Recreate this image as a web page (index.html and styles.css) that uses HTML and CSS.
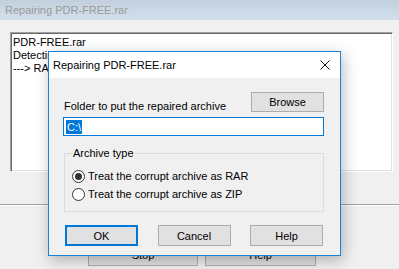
FILE: index.html
```html
<!DOCTYPE html>
<html lang="en">
<head>
  <meta charset="UTF-8">
  <title>Repairing PDR-FREE.rar</title>
  <link rel="stylesheet" href="styles.css">
</head>
<body>
  <div class="app">
    <div class="app-title">Repairing PDR-FREE.rar</div>
    <div class="app-body">
      <div class="log">
        <div>PDR-FREE.rar</div>
        <div>Detecting archive type</div>
        <div>---&gt; RAR archive</div>
      </div>
      <div class="app-sep"></div>
      <div class="app-buttons">
        <button class="btn btn-stop">Stop</button>
        <button class="btn btn-help">Help</button>
      </div>
    </div>

    <div class="dialog">
      <div class="dialog-title">
        <span>Repairing PDR-FREE.rar</span>
        <svg class="close" width="10" height="10" viewBox="0 0 10 10">
          <path d="M0.5 0.5 L9.5 9.5 M9.5 0.5 L0.5 9.5" stroke="#111" stroke-width="1" fill="none"/>
        </svg>
      </div>
      <div class="dialog-body">
        <div class="folder-row">
          <label class="folder-label">Folder to put the repaired archive</label>
          <button class="btn btn-browse">Browse</button>
        </div>
        <div class="path-input"><span class="sel">C:\</span></div>

        <fieldset class="group">
          <legend>Archive type</legend>
          <div class="radio-row"><span class="radio checked"></span>Treat the corrupt archive as RAR</div>
          <div class="radio-row"><span class="radio"></span>Treat the corrupt archive as ZIP</div>
        </fieldset>

        <div class="dialog-buttons">
          <button class="btn btn-default">OK</button>
          <button class="btn">Cancel</button>
          <button class="btn">Help</button>
        </div>
      </div>
    </div>
  </div>
</body>
</html>
```

FILE: styles.css
```css
body {
  margin: 0;
  width: 399px;
  height: 269px;
  overflow: hidden;
  background-color: #f0f0f0;
  font-family: 'Liberation Sans', Arial, sans-serif;
  font-size: 11px;
  color: #000;
}

.app {
  position: relative;
  height: 269px;
}

.app-title {
  height: 20px;
  line-height: 20px;
  padding-left: 5px;
  font-size: 11px;
  color: #9a9a9a;
  background: linear-gradient(#c2cfdc, #d4e0ed);
}

.app-body {
  padding: 12px 6px 0 10px;
}

.log {
  height: 135px;
  padding: 3px 2px 0 2px;
  background-color: #fff;
  border: 1px solid;
  border-color: #a0a0a0 #fff #fff #a0a0a0;
  box-shadow: inset 1px 1px #696969, inset -1px -1px #e3e3e3;
  line-height: 13px;
}

.app-sep {
  margin: 32px -6px 0 -10px;
  height: 1px;
  background-color: #a0a0a0;
  border-bottom: 1px solid #fff;
}

.app-buttons {
  display: flex;
  gap: 7px;
  margin-top: 38px;
  padding-left: 78px;
}

.btn {
  height: 21px;
  padding: 0;
  font-family: inherit;
  font-size: 11px;
  color: #000;
  background-color: #e1e1e1;
  border: 1px solid #adadad;
}

.btn-stop { width: 110px; height: 22px; }
.btn-help { width: 111px; height: 22px; }

.dialog {
  position: absolute;
  left: 48px;
  top: 51px;
  width: 291px;
  background-color: #f0f0f0;
  border: 1px solid #1883d7;
  box-shadow: 2px 4px 14px rgba(0, 0, 0, 0.28);
}

.dialog-title {
  height: 26px;
  display: flex;
  align-items: center;
  justify-content: space-between;
  padding: 0 10px 0 4px;
  background-color: #fff;
}

.dialog-body {
  padding: 14px 16px 9px 14px;
}

.folder-row {
  display: flex;
  justify-content: space-between;
  align-items: flex-end;
}

.folder-label {
  padding-left: 1px;
  line-height: 15px;
  margin-bottom: -2px;
}

.btn-browse {
  width: 73px;
  height: 20px;
}

.path-input {
  margin-top: 5px;
  height: 15px;
  padding: 1px 2px;
  background-color: #fff;
  border: 1px solid #0078d7;
  line-height: 15px;
}

.sel {
  display: inline-block;
  height: 14px;
  line-height: 14px;
  margin-top: 1px;
  padding: 0 1px;
  vertical-align: top;
  background-color: #0078d7;
  color: #fff;
}

.group {
  margin: 10px 0 0 1px;
  padding: 6px 7px 8px 7px;
  border: 1px solid #dcdcdc;
}

.group legend {
  padding: 0 1px;
  line-height: 15px;
}

.radio-row {
  display: flex;
  align-items: center;
  gap: 3px;
  height: 18px;
}

.radio {
  width: 11px;
  height: 11px;
  border: 1px solid #333;
  border-radius: 50%;
  background-color: #fff;
  display: flex;
  align-items: center;
  justify-content: center;
}

.radio.checked::after {
  content: "";
  width: 7px;
  height: 7px;
  border-radius: 50%;
  background-color: #333;
}

.dialog-buttons {
  display: flex;
  justify-content: space-between;
  margin-top: 13px;
  padding: 0 1px 0 2px;
}

.dialog-buttons .btn {
  width: 73px;
}

.btn-default {
  border: 2px solid #0078d7;
}
```
